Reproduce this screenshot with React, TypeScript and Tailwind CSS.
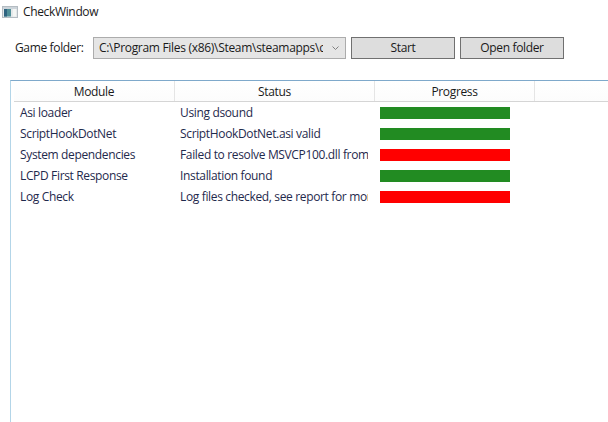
const rows = [
  { module: 'Asi loader', status: 'Using dsound', ok: true },
  { module: 'ScriptHookDotNet', status: 'ScriptHookDotNet.asi valid', ok: true },
  { module: 'System dependencies', status: 'Failed to resolve MSVCP100.dll from system', ok: false },
  { module: 'LCPD First Response', status: 'Installation found', ok: true },
  { module: 'Log Check', status: 'Log files checked, see report for more info', ok: false },
];

function WindowIcon() {
  return (
    <svg width="16" height="12" viewBox="0 0 16 12" className="shrink-0">
      <rect x="0.5" y="0.5" width="15" height="11" fill="#e4e8ea" stroke="#b4bcc2" />
      <rect x="1" y="1" width="14" height="2" fill="#ccd4da" />
      <rect x="2" y="3" width="7" height="7.5" fill="#4f8f98" />
      <rect x="2" y="3" width="3" height="7.5" fill="#2f6480" />
      <rect x="11" y="3" width="3" height="7.5" fill="#f4f6f4" />
    </svg>
  );
}

export default function App() {
  return (
    <div className="w-[608px] h-[422px] overflow-hidden bg-white text-[12px] tracking-[-0.35px] text-[#1a1a1a] font-['Open_Sans','Noto_Sans',sans-serif]">
      <div className="flex items-center h-[24px] pl-[2px] gap-[5px]">
        <WindowIcon />
        <span>CheckWindow</span>
      </div>

      <div className="flex items-center h-[22px] mt-[13px] pl-[15px]">
        <span className="w-[78px]">Game folder:</span>
        <div className="flex items-center justify-between w-[253px] h-[22px] pl-[5px] pr-[6px] bg-[#e5e5e5] border border-[#acacac]">
          <span className="w-[224px] overflow-hidden whitespace-nowrap tracking-[-0.3px]">C:\Program Files (x86)\Steam\steamapps\common</span>
          <svg width="7" height="5" viewBox="0 0 7 5" fill="none" stroke="#808080" strokeWidth="1">
            <path d="M0.5 0.5 L3.5 3.5 L6.5 0.5" />
          </svg>
        </div>
        <button className="w-[104px] h-[22px] ml-[5px] bg-[#dddddd] border border-[#707070]">Start</button>
        <button className="w-[104px] h-[22px] ml-[5px] bg-[#dddddd] border border-[#707070]">Open folder</button>
      </div>

      <div className="ml-[10px] mt-[21px] h-[342px] border-t border-l border-t-[#7fa9cb] border-l-[#b3d5e8] pl-[3px]">
        <div className="flex h-[21px] border-b border-[#d5d5d5] bg-gradient-to-b from-white to-[#fcfcfc]">
          <div className="w-[161px] text-center leading-[21px] border-r border-[#e5e5e5]">Module</div>
          <div className="w-[200px] text-center leading-[21px] border-r border-[#e5e5e5]">Status</div>
          <div className="w-[160px] text-center leading-[21px] border-r border-[#e5e5e5]">Progress</div>
        </div>
        {rows.map((row) => (
          <div key={row.module} className="flex items-center h-[21px] text-[#1f2a4d]">
            <div className="w-[161px] pl-[6px] whitespace-nowrap">{row.module}</div>
            <div className="w-[188px] ml-[5px] overflow-hidden whitespace-nowrap">{row.status}</div>
            <div className={`w-[130px] h-[12px] ml-[12px] ${row.ok ? 'bg-[#228b22]' : 'bg-[#ff0000]'}`} />
          </div>
        ))}
      </div>
    </div>
  );
}
